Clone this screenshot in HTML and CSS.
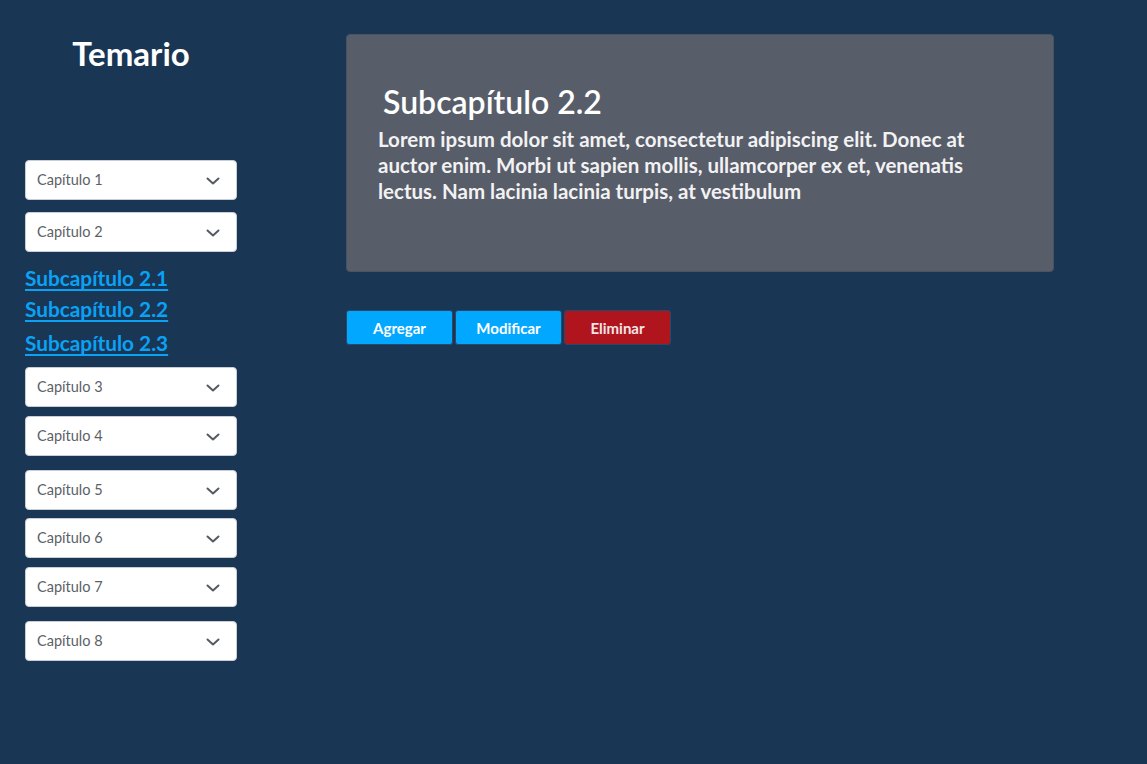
FILE: index.html
```html
<!DOCTYPE html>
<html lang="es">
<head>
<meta charset="utf-8">
<title>Temario</title>
<link rel="stylesheet" href="styles.css">
</head>
<body>
<div class="page">
  <aside class="sidebar">
    <h1 class="side-title">Temario</h1>
    <div class="menu">
      <div class="drop">Capítulo 1<svg class="chev" viewBox="0 0 14 8"><path d="M1.5 1.5 L7 6.5 L12.5 1.5"/></svg></div>
      <div class="drop gap-12">Capítulo 2<svg class="chev" viewBox="0 0 14 8"><path d="M1.5 1.5 L7 6.5 L12.5 1.5"/></svg></div>
      <div class="subs">
        <a class="sub" href="#">Subcapítulo 2.1</a>
        <a class="sub" href="#">Subcapítulo 2.2</a>
        <a class="sub sub-last" href="#">Subcapítulo 2.3</a>
      </div>
      <div class="drop">Capítulo 3<svg class="chev" viewBox="0 0 14 8"><path d="M1.5 1.5 L7 6.5 L12.5 1.5"/></svg></div>
      <div class="drop gap-9">Capítulo 4<svg class="chev" viewBox="0 0 14 8"><path d="M1.5 1.5 L7 6.5 L12.5 1.5"/></svg></div>
      <div class="drop gap-14">Capítulo 5<svg class="chev" viewBox="0 0 14 8"><path d="M1.5 1.5 L7 6.5 L12.5 1.5"/></svg></div>
      <div class="drop gap-8">Capítulo 6<svg class="chev" viewBox="0 0 14 8"><path d="M1.5 1.5 L7 6.5 L12.5 1.5"/></svg></div>
      <div class="drop gap-9">Capítulo 7<svg class="chev" viewBox="0 0 14 8"><path d="M1.5 1.5 L7 6.5 L12.5 1.5"/></svg></div>
      <div class="drop gap-14">Capítulo 8<svg class="chev" viewBox="0 0 14 8"><path d="M1.5 1.5 L7 6.5 L12.5 1.5"/></svg></div>
    </div>
  </aside>
  <main class="content">
    <section class="card">
      <h2 class="card-title">Subcapítulo 2.2</h2>
      <p class="card-text">Lorem ipsum dolor sit amet, consectetur adipiscing elit. Donec at auctor enim. Morbi ut sapien mollis, ullamcorper ex et, venenatis lectus. Nam lacinia lacinia turpis, at vestibulum</p>
    </section>
    <div class="actions">
      <button class="btn btn-blue">Agregar</button>
      <button class="btn btn-blue">Modificar</button>
      <button class="btn btn-red">Eliminar</button>
    </div>
  </main>
</div>
</body>
</html>
```
FILE: styles.css
```css
html, body {
  margin: 0;
  padding: 0;
}
body {
  background: #1a3655;
  font-family: Lato, "Noto Sans", sans-serif;
  height: 764px;
  overflow: hidden;
}
.page {
  display: flex;
}
.sidebar {
  width: 262px;
  display: flex;
  flex-direction: column;
}
.side-title {
  margin: 34px 0 0 0;
  text-align: center;
  color: #ffffff;
  font-size: 33px;
  font-weight: 700;
  line-height: 38px;
}
.menu {
  margin: 88px 0 0 25px;
  display: flex;
  flex-direction: column;
  width: 212px;
}
.drop {
  box-sizing: border-box;
  height: 40px;
  background: #ffffff;
  border: 1px solid #c9ced6;
  border-radius: 4px;
  display: flex;
  align-items: center;
  justify-content: space-between;
  padding: 0 16px 2px 11px;
  font-size: 14.5px;
  color: #5b5f66;
}
.gap-8 { margin-top: 8px; }
.gap-9 { margin-top: 9px; }
.gap-12 { margin-top: 12px; }
.gap-14 { margin-top: 14px; }
.chev {
  width: 14px;
  height: 8px;
  fill: none;
  stroke: #555a61;
  stroke-width: 2;
  stroke-linecap: round;
  stroke-linejoin: round;
  margin-top: 4px;
}
.subs {
  display: flex;
  flex-direction: column;
  padding: 10px 0 0 0;
}
.sub {
  color: #0aa2f5;
  font-size: 20.8px;
  font-weight: 700;
  line-height: 31px;
  text-decoration: underline;
  text-underline-offset: 3px;
  width: fit-content;
}
.sub-last {
  margin-top: 3px;
  margin-bottom: 9px;
}
.content {
  margin-left: 84px;
  display: flex;
  flex-direction: column;
}
.card {
  margin-top: 34px;
  box-sizing: border-box;
  width: 708px;
  height: 238px;
  background: #585d6a;
  border: 1px solid #4d5260;
  border-radius: 4px;
  padding: 47px 30px 0 31px;
}
.card-title {
  margin: 0 0 0 5px;
  color: #ffffff;
  font-size: 32px;
  font-weight: 600;
  line-height: 40px;
}
.card-text {
  margin: 4px 0 0 0;
  color: #f2f2f2;
  font-size: 20.5px;
  font-weight: 700;
  line-height: 26px;
}
.actions {
  margin-top: 38px;
  display: flex;
  gap: 2px;
}
.btn {
  box-sizing: border-box;
  width: 107px;
  height: 35px;
  border: 1px solid #2b4868;
  border-radius: 3px;
  color: #ffffff;
  font-family: Lato, "Noto Sans", sans-serif;
  font-size: 15px;
  font-weight: 700;
  cursor: pointer;
}
.btn-blue { background: #02a7ff; }
.btn-red { background: #b0141d; color: #f3e6e6; }
```
